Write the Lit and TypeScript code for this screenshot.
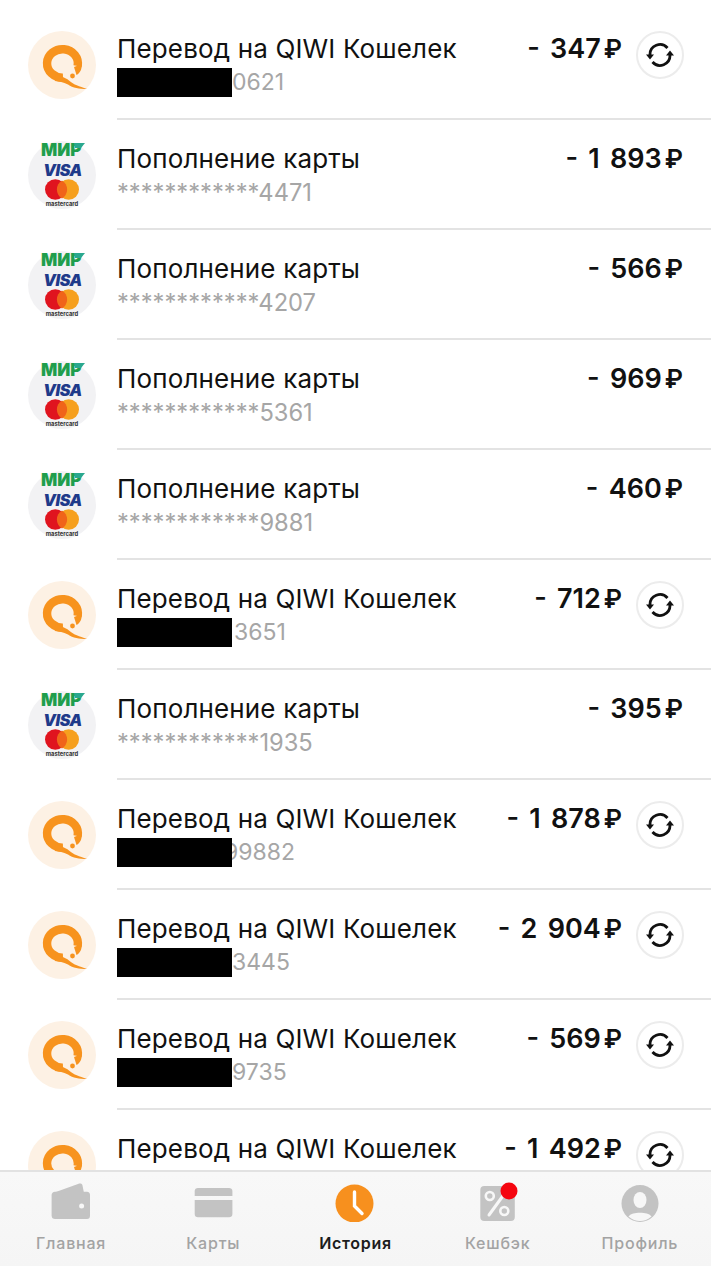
import { LitElement, html, css, svg } from "lit";
import { customElement } from "lit/decorators.js";

type Row = { kind: "q" | "c"; amount: string; digits: string; shift?: number };

const rows: Row[] = [
  { kind: "q", amount: "- 347", digits: "0621" },
  { kind: "c", amount: "- 1 893", digits: "************4471" },
  { kind: "c", amount: "- 566", digits: "************4207" },
  { kind: "c", amount: "- 969", digits: "************5361" },
  { kind: "c", amount: "- 460", digits: "************9881" },
  { kind: "q", amount: "- 712", digits: "3651", shift: 2 },
  { kind: "c", amount: "- 395", digits: "************1935" },
  { kind: "q", amount: "- 1 878", digits: "99882", shift: -8 },
  { kind: "q", amount: "- 2 904", digits: "3445" },
  { kind: "q", amount: "- 569", digits: "9735" },
  { kind: "q", amount: "- 1 492", digits: "" },
];

const qiwi = svg`<svg class="avatar" viewBox="0 0 68 68" width="68" height="68">
  <circle cx="34" cy="34" r="34" fill="#fdf1e4"/>
  <path d="M35 46.6 A15.4 14.2 0 1 1 49.6 35" fill="none" stroke="#f7931e" stroke-width="8.4"/>
  <path d="M53.900 33 C54 38 52 42 48.500 44 L46 36Z" fill="#f7931e"/>
  <path d="M28 43 C33 46 37 46 41 49.500 C46 54 51 55 59 58 C51 58 45 57 40 53.500 C35 51 31 50.500 27 50Z" fill="#f7931e"/>
  <circle cx="44.500" cy="45" r="2.400" fill="#f7931e"/>
</svg>`;

const cards = svg`<svg class="avatar" viewBox="0 0 68 68" width="68" height="68">
  <circle cx="34" cy="34" r="34" fill="#f2f2f4"/>
  <text x="13" y="15" class="mir">МИР</text>
  <path d="M46 2 H57 L53 7 H47Z" fill="#2aa88f"/>
  <text x="34.500" y="35" text-anchor="middle" class="visa">VISA</text>
  <circle cx="27.300" cy="48.500" r="10.300" fill="#e0141f"/>
  <circle cx="40.700" cy="48.500" r="10.300" fill="#f6a01f"/>
  <path d="M34 39.600 A10.300 10.300 0 0 1 34 57.400 A10.300 10.300 0 0 1 34 39.600Z" fill="#f0641a"/>
  <text x="34" y="65" text-anchor="middle" class="mc">mastercard</text>
</svg>`;

const refresh = svg`<svg viewBox="0 0 28 26" width="28" height="26">
  <path d="M4 13 A10 10 0 0 1 21.500 6" fill="none" stroke="#111" stroke-width="2.800"/>
  <path d="M24 13 A10 10 0 0 1 6.500 20" fill="none" stroke="#111" stroke-width="2.800"/>
  <path d="M0 12.500 H8 L4 17.500Z M20 13.500 H28 L24 8.500Z" fill="#111"/>
</svg>`;

const G = "#c3c3c3";
const B = "#f7f7f7";
const tabs = [
  {
    label: "Главная",
    icon: svg`<svg viewBox="0 0 46 44" width="46" height="44">
      <path d="M5 15 L30 6 C32.500 5 34 5.500 34.500 7.500 L36 15Z" fill=${G}/>
      <path d="M3.600 17 C3.600 15 5 13.700 7 13.700 H39 C41 13.700 42 15 42 17 V37.500 C42 40 41 41 39 41 H7 C5 41 3.600 40 3.600 37.500Z" fill=${G}/>
      <circle cx="33.600" cy="28" r="2.500" fill=${B}/></svg>`,
  },
  {
    label: "Карты",
    icon: svg`<svg viewBox="0 0 46 44" width="46" height="44">
      <path d="M4.700 13 C4.700 11 6 10 8 10 H39 C41 10 42.400 11 42.400 13 V18 H4.700Z" fill=${G}/>
      <path d="M4.700 22 H42.400 V36 C42.400 38.300 41 39.300 39 39.300 H8 C6 39.300 4.700 38.300 4.700 36Z" fill=${G}/></svg>`,
  },
  {
    label: "История",
    active: true,
    icon: svg`<svg viewBox="0 0 46 44" width="46" height="44">
      <circle cx="22.500" cy="25.500" r="19" fill="#f7901e"/>
      <path d="M22.500 14 V28 L30 35.500" fill="none" stroke="#fff" stroke-width="3.400" stroke-linecap="round"/></svg>`,
  },
  {
    label: "Кешбэк",
    icon: svg`<svg viewBox="0 0 46 44" width="46" height="44" style="overflow:visible">
      <rect x="5.300" y="8" width="34.500" height="35" rx="4" fill=${G}/>
      <circle cx="14.800" cy="18" r="4" fill="none" stroke=${B} stroke-width="2.600"/>
      <circle cx="29.300" cy="33" r="4" fill="none" stroke=${B} stroke-width="2.600"/>
      <path d="M30 15 L14 37" stroke=${B} stroke-width="3" stroke-linecap="round"/>
      <circle cx="34" cy="13" r="8.500" fill="#f5050f"/></svg>`,
  },
  {
    label: "Профиль",
    icon: svg`<svg viewBox="0 0 46 44" width="46" height="44">
      <circle cx="23" cy="25.500" r="18.500" fill=${G}/>
      <ellipse cx="23" cy="22" rx="6.500" ry="8" fill=${B}/>
      <path d="M11.500 38.500 C14 35.500 18 34.800 23 34.800 C28 34.800 32 35.500 34.500 38.500 C31 41.800 27 43 23 43 C19 43 15 41.800 11.500 38.500Z" fill=${B}/></svg>`,
  },
];

@customElement("app-root")
export class AppRoot extends LitElement {
  static styles = css`
    :host {
      display: flex;
      flex-direction: column;
      width: 711px;
      height: 1266px;
      overflow: hidden;
      background: #fff;
      font-family: Inter, "Liberation Sans", sans-serif;
      color: #111;
    }
    .list {
      flex: 1;
      min-height: 0;
      overflow: hidden;
      padding-top: 10px;
    }
    .row {
      display: flex;
      height: 110.05px;
      padding-left: 28px;
    }
    .avatar {
      flex: none;
      margin-top: 21px;
      overflow: visible;
    }
    .mir { font: 900 17px Inter, sans-serif; fill: #1f9e4d; }
    .visa { font: italic 900 16px Inter, sans-serif; fill: #1f3a8a; letter-spacing: -0.4px; }
    .mc { font: 700 5.8px Inter, sans-serif; fill: #333; }
    .body {
      flex: 1;
      margin-left: 21px;
      display: flex;
      justify-content: space-between;
      border-bottom: 2px solid #e3e3e3;
      padding-right: 27px;
    }
    .left {
      padding-top: 22px;
      min-width: 0;
    }
    .title {
      font-size: 26px;
      line-height: 33px;
      font-weight: 400;
      letter-spacing: 0.15px;
      white-space: nowrap;
    }
    .sub {
      display: flex;
      align-items: center;
      height: 34px;
      font-size: 23.7px;
      color: #a6a6a6;
      white-space: nowrap;
    }
    .sub.masked { font-size: 23px; }
    .mask {
      width: 115px;
      height: 29px;
      background: #000;
      flex: none;
      position: relative;
      z-index: 1;
    }
    .right {
      display: flex;
      gap: 13px;
      padding-top: 21px;
    }
    .amount {
      font-size: 27px;
      font-weight: 600;
      line-height: 34px;
      white-space: nowrap;
      word-spacing: 3.5px;
      padding-top: 1px;
      margin-right: 1px;
    }
    .cur { margin-left: 3px; font-size: 25px; }
    .btn {
      width: 48px;
      height: 48px;
      box-sizing: border-box;
      border: 2px solid #ececec;
      border-radius: 50%;
      background: #fff;
      display: flex;
      align-items: center;
      justify-content: center;
    }
    .tabbar {
      flex: none;
      height: 96px;
      box-sizing: border-box;
      display: grid;
      grid-template-columns: repeat(5, 1fr);
      background: linear-gradient(#f8f8f8, #f5f5f5);
      border-top: 2px solid #e2e2e2;
    }
    .tab {
      display: flex;
      flex-direction: column;
      align-items: center;
      color: #a3a3a3;
      font-size: 16px;
      letter-spacing: 0.8px;
      font-weight: 500;
    }
    .tab.active { color: #1c1c1c; font-weight: 600; letter-spacing: 0.7px; }
    .ico {
      height: 44px;
      padding-top: 6px;
    }
    .ico svg { display: block; }
    .lab { margin-top: 11px; line-height: 20px; }
  `;

  private row(r: Row) {
    const q = r.kind === "q";
    return html`<div class="row">
      ${q ? qiwi : cards}
      <div class="body">
        <div class="left">
          <div class="title">${q ? "Перевод на QIWI Кошелек" : "Пополнение карты"}</div>
          ${r.digits
            ? html`<div class="sub ${q ? "masked" : ""}">
                ${q ? html`<span class="mask"></span>` : ""}
                <span style=${r.shift ? `margin-left:${r.shift}px` : ""}>${r.digits}</span>
              </div>`
            : ""}
        </div>
        <div class="right">
          <div class="amount">${r.amount}<span class="cur">₽</span></div>
          ${q ? html`<div class="btn">${refresh}</div>` : ""}
        </div>
      </div>
    </div>`;
  }

  render() {
    return html`<div class="list">${rows.map((r) => this.row(r))}</div>
      <div class="tabbar">
        ${tabs.map(
          (t) => html`<div class="tab ${t.active ? "active" : ""}">
            <div class="ico">${t.icon}</div>
            <div class="lab">${t.label}</div>
          </div>`
        )}
      </div>`;
  }
}
